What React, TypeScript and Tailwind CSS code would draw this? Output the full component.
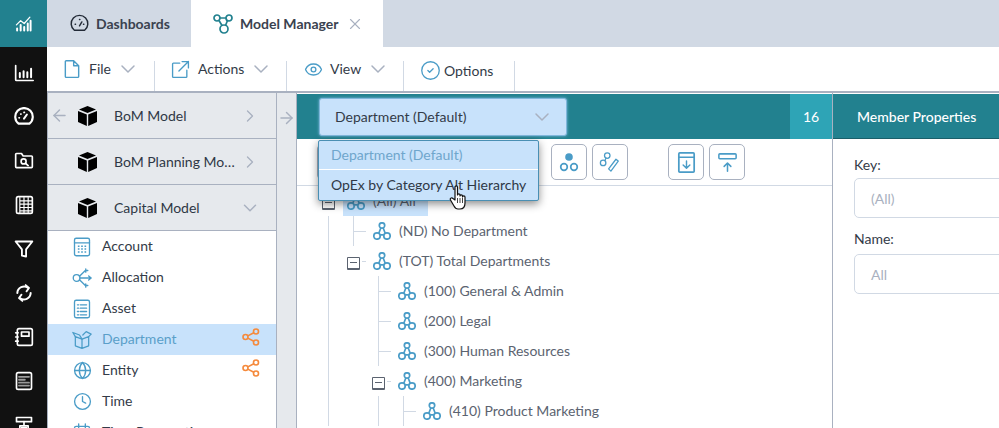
import React from 'react';
import { ArrowLeft, ArrowRight, ChevronDown, ChevronRight, Clock, Globe, Eye, CircleCheck, X } from 'lucide-react';

const BLUE = '#4a9cc7';

const Svg: React.FC<{ size?: number; color?: string; sw?: number; className?: string; children: React.ReactNode }> = ({
  size = 20,
  color = BLUE,
  sw = 2,
  className = '',
  children,
}) => (
  <svg
    width={size}
    height={size}
    viewBox="0 0 24 24"
    fill="none"
    stroke={color}
    strokeWidth={sw}
    strokeLinecap="round"
    strokeLinejoin="round"
    className={`shrink-0 ${className}`}
  >
    {children}
  </svg>
);

const railIcons: React.ReactNode[] = [
  <>
    <path d="M2 3v17a1 1 0 0 0 1 1h20" />
    <path d="M7 17v-5M11.500 17v-7M16 17v-6M20.500 17V7" strokeWidth={2.400} />
  </>,
  <>
    <path d="M5.500 20a10.500 10.500 0 1 1 13 0z" strokeWidth={2.600} />
    <path d="M12 14l3.500-5" strokeWidth={2.400} />
    <path d="M6 13h.5M8 8.500h.5M12 6.500h.5" />
  </>,
  <>
    <path d="M2 6V4a1 1 0 0 1 1-1h6l2 3h10a1 1 0 0 1 1 1v12a1 1 0 0 1-1 1H3a1 1 0 0 1-1-1z" />
    <circle cx="11.500" cy="12.500" r="3" />
    <path d="M14 15l3 2.500" />
  </>,
  <>
    <path d="M5 2h15a2 2 0 0 1 2 2v16a2 2 0 0 1-2 2H5a2 2 0 0 1-2-2V4a2 2 0 0 1 2-2z" />
    <path d="M7 7h15M7 11h15M7 15h15M7 19h15M7 3v18M12 3v18M17 3v18" strokeWidth={1.400} />
  </>,
  <path d="M2 3h20l-7.500 9.500V21l-5-1v-7.500z" strokeWidth={2.200} />,
  <>
    <path d="M4 12a8 8 0 0 1 13-6" strokeWidth={2.400} />
    <path d="M20 12a8 8 0 0 1-13 6" strokeWidth={2.400} />
    <path d="M14 2.500l4 3.500-3 4M10 21.500L6 18l3-4" strokeWidth={2.200} />
  </>,
  <>
    <rect x="4" y="2" width="18" height="20" rx="2" />
    <rect x="9" y="6" width="9" height="5" />
    <path d="M2 7h3M2 12h3M2 17h3" />
  </>,
  <>
    <rect x="3" y="2" width="18" height="20" rx="2" />
    <path d="M6 7h12M6 10.500h7M6 14h12M6 17.500h12" strokeWidth={2.200} stroke="#9a9a9a" />
  </>,
  <>
    <rect x="3" y="3" width="18" height="5" />
    <path d="M12 8v5M7 22v-9h10v9" />
    <rect x="9" y="15" width="6" height="5" />
  </>,
];

const CubeIcon = () => (
  <svg width="19" height="20" viewBox="0 0 19 20" className="shrink-0">
    <path d="M9.500 0L18 3.500 9.500 7 1 3.500z" fill="#000" />
    <path d="M0 5l8.800 3.600V20L0 16z" fill="#000" />
    <path d="M19 5l-8.800 3.600V20L19 16z" fill="#000" />
  </svg>
);

const NodeIcon = ({ size = 18 }: { size?: number }) => (
  <svg width={size} height={size} viewBox="0 0 18 18" fill="none" stroke={BLUE} strokeWidth="1.700" className="shrink-0">
    <circle cx="9" cy="3.500" r="2.700" />
    <circle cx="4" cy="14" r="3.200" />
    <circle cx="14" cy="14" r="3.200" />
    <path d="M7.800 6L5.800 11.300M10.200 6L12.200 11.300M7.200 12.800h3.600" />
  </svg>
);

const ShareIcon = () => (
  <svg width="18" height="18" viewBox="0 0 18 18" fill="none" stroke="#f58a3c" strokeWidth="1.600" className="shrink-0">
    <circle cx="3.500" cy="9" r="2.500" />
    <circle cx="14" cy="3.500" r="2.500" />
    <circle cx="14" cy="14.500" r="2.500" />
    <path d="M5.800 7.900l6-3.200M5.800 10.100l6 3.200" />
  </svg>
);

const leftItems: { label: string; shared?: boolean; active?: boolean; icon: React.ReactNode }[] = [
  {
    label: 'Account',
    icon: (
      <Svg size={20} sw={1.600}>
        <rect x="3" y="1.500" width="18" height="21" rx="2" />
        <path d="M3 7h18" />
        <path d="M7 11h2M11 11h2M15 11h2M7 14.500h2M11 14.500h2M15 14.500h2M7 18h2M11 18h2M15 18h2" strokeWidth={1.800} strokeLinecap="butt" />
      </Svg>
    ),
  },
  {
    label: 'Allocation',
    icon: (
      <Svg size={20} sw={1.600}>
        <circle cx="5.500" cy="12" r="4" />
        <path d="M9.500 12H23M9 10l7-7h3M9 14l7 7h3M20 9.500l3 2.500-3 2.500M16.500 1v4M16.500 19v4" />
      </Svg>
    ),
  },
  {
    label: 'Asset',
    icon: (
      <Svg size={20} sw={1.600}>
        <rect x="3" y="1.500" width="18" height="21" rx="2" />
        <path d="M6.500 7h1.500M10 7h7.500M6.500 11h1.500M10 11h7.500M6.500 15h1.500M10 15h7.500M6.500 19h1.500M10 19h7.500" />
      </Svg>
    ),
  },
  {
    label: 'Department',
    active: true,
    icon: (
      <Svg size={20} sw={1.500}>
        <path d="M4 8l8 3 8-3v11l-8 3-8-3zM12 11v11" />
        <path d="M4 8L1 3l8 3 3 5M20 8l3-3-6-3-4 4" />
      </Svg>
    ),
  },
  { label: 'Entity', shared: true, icon: <Globe size={19} color={BLUE} strokeWidth={1.700} className="shrink-0" /> },
  { label: 'Time', icon: <Clock size={19} color={BLUE} strokeWidth={1.700} className="shrink-0" /> },
  {
    label: 'Time Perspective',
    icon: (
      <Svg size={20} sw={1.600}>
        <rect x="3" y="4" width="18" height="18" rx="2" />
        <path d="M8 1v5M16 1v5M3 9h18" />
      </Svg>
    ),
  },
];

const lineColor = 'bg-[#d1d9e4]';

const VLine = () => (
  <div className="w-[25px] h-full shrink-0 pl-3">
    <div className={`w-px h-full ${lineColor}`} />
  </div>
);

const Blank = () => <div className="w-[25px] h-full shrink-0" />;

const Tee = () => (
  <div className="w-[25px] h-full shrink-0 pl-3 flex">
    <div className={`w-px h-full ${lineColor}`} />
    <div className={`w-[16px] h-px mt-[15px] ${lineColor}`} />
  </div>
);

const MinusBox = ({ link = true }: { link?: boolean }) => (
  <div className="w-[25px] h-full shrink-0 flex items-center pl-[6px] pt-[4px]">
    <div className="w-[13px] h-[13px] shrink-0 border border-[#5b6370] border-b-2 bg-white rounded-[1px] flex items-center justify-center">
      <div className="w-[7px] h-px bg-[#5b6370]" />
    </div>
    {link && <div className={`w-[5px] h-px ml-[2px] -mt-[4px] ${lineColor}`} />}
  </div>
);

const TreeRow: React.FC<{ cols: React.ReactNode; label: string }> = ({ cols, label }) => (
  <div className="h-[30px] flex items-stretch">
    {cols}
    <div className="flex items-center ml-[4px]">
      <div className="w-6 flex justify-center">
        <NodeIcon />
      </div>
      <span className="ml-[5px] -mt-[2px] text-[14px] text-[#5b6370] whitespace-nowrap">{label}</span>
    </div>
  </div>
);

const ToolButton: React.FC<{ className?: string; children?: React.ReactNode }> = ({ className = '', children }) => (
  <div className={`w-9 h-9 shrink-0 border border-[#a9b1c0] rounded-[5px] bg-white flex items-center justify-center ${className}`}>
    {children}
  </div>
);

const Accordion: React.FC<{ label: string; back?: boolean; open?: boolean }> = ({ label, back, open }) => (
  <div className="h-[46px] shrink-0 bg-[#e6e9ed] border-b border-[#a9b1c0] flex items-center">
    <div className="w-[30px] pr-[8px] flex justify-center">
      {back && <ArrowLeft size={19} color="#a9b1c0" strokeWidth={1.800} />}
    </div>
    <CubeIcon />
    <span className="ml-[17px] w-[128px] truncate text-[14px] text-[#2f3846]">{label}</span>
    <div className="ml-px w-[14px] flex justify-center">
      {open ? <ChevronDown size={22} color="#a9b1c0" strokeWidth={1.600} className="shrink-0" /> : <ChevronRight size={20} color="#a9b1c0" strokeWidth={1.600} className="shrink-0" />}
    </div>
  </div>
);

const MenuItem: React.FC<{ icon: React.ReactNode; label: string; chevron?: boolean; className?: string }> = ({ icon, label, chevron = true, className = '' }) => (
  <div className={`h-full flex items-center ${className}`}>
    {icon}
    <span className="-mt-[2px] text-[14px] text-[#333b48]">{label}</span>
    {chevron && <ChevronDown size={24} color="#a9b1c0" strokeWidth={1.500} className="ml-[5px]" />}
  </div>
);

export default function App() {
  return (
    <div className="w-[999px] h-[428px] overflow-hidden flex bg-white font-[family-name:Lato,sans-serif]">
      {/* icon rail */}
      <div className="w-[47px] shrink-0 bg-[#111111] flex flex-col">
        <div className="h-[47px] shrink-0 bg-[#22818f] flex items-center justify-center">
          <Svg size={17} color="#ffffff" sw={2.800}>
            <path d="M2 14l6-6 5 4 8-9" strokeWidth={1.800} />
            <path d="M3 22v-3M8 22v-8M13 22v-5M18 22V12M22 22V8" />
          </Svg>
        </div>
        <div className="pt-1 flex flex-col">
          {railIcons.map((icon, i) => (
            <div key={i} className="h-11 shrink-0 flex items-center justify-center">
              <Svg size={20} color="#ffffff" sw={2}>
                {icon}
              </Svg>
            </div>
          ))}
        </div>
      </div>

      <div className="flex-1 min-w-0 flex flex-col">
        {/* tabs */}
        <div className="h-[47px] shrink-0 bg-[#d1d9e4] flex">
          <div className="w-[144px] flex items-center pl-[23px]">
            <Svg size={19} color="#222a36" sw={1.800}>
              <path d="M5.500 20.500a10.500 10.500 0 1 1 13 0z" />
              <path d="M12 15l3-5M6.500 13h.5M12 7h.5M17 13h.5" />
            </Svg>
            <span className="ml-[7px] text-[14px] font-bold text-[#3a424f]">Dashboards</span>
          </div>
          <div className="w-[192px] bg-white flex items-center pl-[22px]">
            <svg width="20" height="20" viewBox="0 0 20 20" fill="none" stroke="#22818f" strokeWidth="1.700" className="shrink-0">
              <circle cx="4" cy="4" r="3" />
              <circle cx="16" cy="4" r="3" />
              <circle cx="11" cy="15" r="4" />
              <path d="M7 4h6M6 6.500l3 5M14.500 6.500l-2 5" />
            </svg>
            <span className="ml-[7px] text-[14px] font-bold text-[#3a424f] whitespace-nowrap">Model Manager</span>
            <X size={18} color="#a9b1c0" strokeWidth={1.500} className="ml-[8px]" />
          </div>
        </div>

        {/* toolbar */}
        <div className="h-[46px] shrink-0 border-b-2 border-[#a9b1c0] flex pl-[15px]">
          <MenuItem
            className="w-[92px]"
            label="File"
            icon={
              <Svg size={20} sw={1.700} className="mr-[7px]">
                <path d="M5 2h9l6 6v13a1 1 0 0 1-1 1H5a1 1 0 0 1-1-1V3a1 1 0 0 1 1-1zM14 2v6h6" />
              </Svg>
            }
          />
          <div className="self-end h-[30px] w-px bg-[#d1d9e4]" />
          <MenuItem
            className="w-[131px] pl-[16px]"
            label="Actions"
            icon={
              <Svg size={19} sw={1.700} className="mr-[8px]">
                <path d="M11 4H3a1 1 0 0 0-1 1v16a1 1 0 0 0 1 1h16a1 1 0 0 0 1-1v-8M14 2h8v8M22 2L10 14" />
              </Svg>
            }
          />
          <div className="self-end h-[30px] w-px bg-[#d1d9e4]" />
          <MenuItem
            className="w-[116px] pl-[17px]"
            label="View"
            icon={<Eye size={19} color={BLUE} strokeWidth={1.700} className="mr-[7px]" />}
          />
          <div className="self-end h-[30px] w-px bg-[#d1d9e4]" />
          <MenuItem
            className="w-[110px] pl-[16px] pt-[4px]"
            label="Options"
            chevron={false}
            icon={<CircleCheck size={21} color={BLUE} strokeWidth={1.500} className="mr-[3px] -mt-[2px]" />}
          />
          <div className="self-end h-[30px] w-px bg-[#d1d9e4]" />
        </div>

        <div className="flex-1 min-h-0 flex">
          {/* model list */}
          <div className="w-[230px] shrink-0 border-l border-r border-[#a9b1c0] flex flex-col">
            <Accordion label="BoM Model" back />
            <Accordion label="BoM Planning Model" />
            <Accordion label="Capital Model" open />
            {leftItems.map((item) => (
              <div
                key={item.label}
                className={`h-[31px] shrink-0 flex items-center pl-[24px] pr-[16px] ${item.active ? 'bg-[#c8e2fb]' : ''}`}
              >
                <div className="w-5 flex justify-center">{item.icon}</div>
                <span className={`ml-[10px] -mt-[2px] text-[14px] whitespace-nowrap ${item.active ? 'text-[#5a9fc9]' : 'text-[#333b48]'}`}>
                  {item.label}
                </span>
                {item.shared || item.active ? (
                  <div className="ml-auto mb-[6px]">
                    <ShareIcon />
                  </div>
                ) : null}
              </div>
            ))}
          </div>

          {/* splitter */}
          <div className="w-[20px] shrink-0 bg-[#e6e9ed] border-r border-[#a9b1c0] pt-[15px] flex justify-center">
            <ArrowRight size={20} color="#a9b1c0" strokeWidth={1.800} />
          </div>

          {/* hierarchy panel */}
          <div className="relative w-[536px] shrink-0 border-r border-[#a9b1c0] flex flex-col pt-px">
            <div className="h-[45px] shrink-0 bg-[#22818f] flex items-center pl-[22px]">
              <div className="w-[248px] h-[38px] bg-[#c8e2fb] rounded-[3px] border border-[#7fb7dc] shadow-[0_0_3px_#7fb7dc] flex items-center pl-[15px] pr-[12px] justify-between">
                <span className="text-[14px] text-[#333b48]">Department (Default)</span>
                <ChevronDown size={24} color="#a9b1c0" strokeWidth={1.500} />
              </div>
              <div className="ml-auto w-[42px] h-full bg-[#2ea4b6] flex items-center justify-center text-[14px] text-white">16</div>
            </div>
            <div className="h-[47px] shrink-0 border-b border-[#d1d9e4] flex items-center pl-[20px]">
              <ToolButton />
              <ToolButton className="ml-[198px]">
                <svg width="22" height="22" viewBox="0 0 22 22" fill="none" stroke={BLUE} strokeWidth="1.700">
                  <circle cx="11" cy="6" r="3.800" fill={BLUE} stroke="none" />
                  <circle cx="6" cy="16" r="3.300" />
                  <circle cx="16" cy="16" r="3.300" />
                </svg>
              </ToolButton>
              <ToolButton className="ml-[5px]">
                <Svg size={22} sw={1.400}>
                  <circle cx="9" cy="5" r="3" />
                  <circle cx="4.500" cy="13" r="3" />
                  <path d="M7.500 8l-1 2.500M13 22l8-11-2.500-2-8 10.500zM13 22l-2.500-2.500" />
                </Svg>
              </ToolButton>
              <ToolButton className="ml-[40px]">
                <Svg size={23} sw={1.800} color={BLUE}>
                  <rect x="4" y="2" width="16" height="20" rx="1" />
                  <path d="M4 6.500h16M12 10.500v7M8.500 14.500l3.500 3.500 3.500-3.500" strokeWidth={1.500} />
                </Svg>
              </ToolButton>
              <ToolButton className="ml-[5px]">
                <Svg size={23} sw={1.600} color={BLUE}>
                  <rect x="3" y="3" width="18" height="5" rx="1" />
                  <path d="M12 21v-8M8.500 16l3.500-3.500 3.500 3.500" />
                </Svg>
              </ToolButton>
            </div>

            {/* tree */}
            <div className="flex-1 min-h-0 overflow-hidden pl-[19px]">
              <div className="h-[30px] flex items-stretch">
                <MinusBox link={false} />
                <div className="ml-[2px] w-[85px] bg-[#c8e2fb] flex items-center pl-[4px]">
                  <NodeIcon />
                  <span className="ml-[8px] -mt-[2px] text-[14px] text-[#5b6370] whitespace-nowrap">(All) All</span>
                </div>
              </div>
              <TreeRow label="(ND) No Department" cols={<><VLine /><Tee /></>} />
              <TreeRow label="(TOT) Total Departments" cols={<><VLine /><MinusBox /></>} />
              <TreeRow label="(100) General & Admin" cols={<><VLine /><Blank /><Tee /></>} />
              <TreeRow label="(200) Legal" cols={<><VLine /><Blank /><Tee /></>} />
              <TreeRow label="(300) Human Resources" cols={<><VLine /><Blank /><Tee /></>} />
              <TreeRow label="(400) Marketing" cols={<><VLine /><Blank /><MinusBox /></>} />
              <TreeRow label="(410) Product Marketing" cols={<><VLine /><Blank /><VLine /><Tee /></>} />
            </div>

            {/* open dropdown */}
            <div className="absolute left-[21px] top-[47px] w-[221px] h-[61px] bg-[#c8e2fb] border border-[#4a8fb3] rounded-[2px] shadow-[0_3px_8px_rgba(0,0,0,0.45)] flex flex-col">
              <div className="h-[29px] flex items-center pl-[12px] pb-[2px] border-b border-white text-[14px] text-[#6fa6cc]">Department (Default)</div>
              <div className="flex-1 flex items-center pl-[12px] pb-[2px] text-[14px] text-[#2f3846]">OpEx by Category Alt Hierarchy</div>
            </div>

            {/* mouse cursor */}
            <svg width="20" height="26" viewBox="0 0 20 26" className="absolute left-[152px] top-[92px]">
              <path
                d="M6 2c0-1.500 2.500-1.500 2.500 0v8c0-1.500 2.500-1.500 2.500 0v1c0-1.500 2.500-1.500 2.500 0v1c0-1.500 2.500-1.500 2.500 0v6c0 3-1.500 6-5 6H9c-2 0-3-1-4-3l-3.500-6c-1-1.500 1-3 2.500-1.500L6 15z"
                fill="#fff"
                stroke="#111"
                strokeWidth="1.200"
                strokeLinejoin="round"
              />
              <path d="M8.500 13v5M11 13v5M13.500 13v5" stroke="#111" strokeWidth="0.800" />
            </svg>
          </div>

          {/* member properties */}
          <div className="flex-1 min-w-0 flex flex-col pt-px">
            <div className="h-[45px] shrink-0 bg-[#22818f] border-b border-[#1a5f6a] flex items-center pl-[24px] text-[14px] font-medium text-white whitespace-nowrap">
              Member Properties
            </div>
            <div className="pl-[21px] pt-[17px] flex flex-col">
              <label className="text-[14px] leading-[18px] text-[#333b48]">Key:</label>
              <div className="mt-[4px] w-[160px] h-10 shrink-0 border border-[#d1d9e4] rounded-[5px] flex items-center pl-[16px] text-[14px] text-[#a9b1c0]">(All)</div>
              <label className="mt-[12px] text-[14px] leading-[18px] text-[#333b48]">Name:</label>
              <div className="mt-[6px] w-[160px] h-10 shrink-0 border border-[#d1d9e4] rounded-[5px] flex items-center pl-[16px] text-[14px] text-[#a9b1c0]">All</div>
            </div>
          </div>
        </div>
      </div>
    </div>
  );
}
